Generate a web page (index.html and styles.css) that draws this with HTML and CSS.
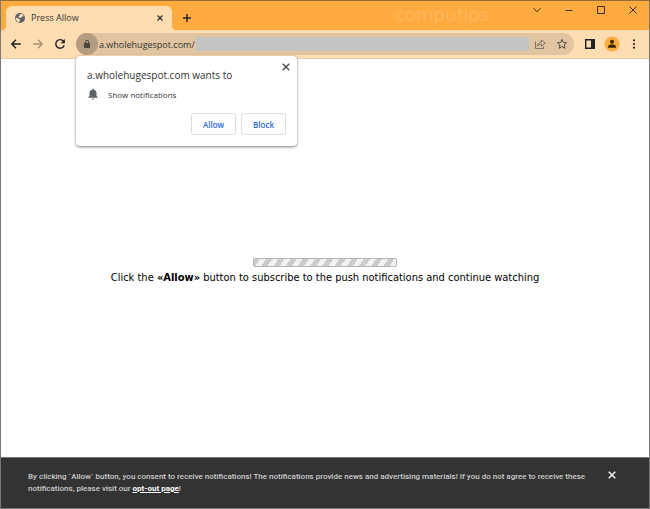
FILE: index.html
```html
<!DOCTYPE html>
<html lang="en">
<head>
    <meta charset="UTF-8">
    <meta name="viewport" content="width=device-width, initial-scale=1.0">
    <title>Press Allow</title>
    <link rel="stylesheet" href="styles.css">
</head>
<body>
    <div class="window">
        <header class="title-bar">
            <div class="tab">
                <svg class="tab-icon" width="12" height="12" viewBox="0 0 12 12">
                    <circle cx="6" cy="6" r="5" fill="#5f6368"/>
                    <path d="M5.800 1.900L8.800 2.300 9.700 4.200 7.700 4.700 6.800 5.900 4.800 5.500 4.400 4.200 5.900 3.500zM1.700 5.600L4 6.400 6 7.300 6 8.800 4.800 10.200 3 9.400 1.900 7.600z" fill="#ffddb3"/>
                </svg>
                <span class="tab-title">Press Allow</span>
                <button class="icon-button tab-close" aria-label="Close tab">
                    <svg width="6" height="6" viewBox="0 0 6 6"><path d="M.5.5l5 5M5.5.5l-5 5" stroke="#333" stroke-width="1.3"/></svg>
                </button>
            </div>
            <button class="icon-button new-tab" aria-label="New tab">
                <svg width="8" height="8" viewBox="0 0 8 8"><path d="M4 0v8M0 4h8" stroke="#29251f" stroke-width="1.5"/></svg>
            </button>
            <span class="watermark">computips</span>
            <div class="window-controls">
                <button class="icon-button" aria-label="Search tabs">
                    <svg width="8" height="8" viewBox="0 0 8 8"><path d="M.5 2.2L4 5.8l3.500-3.600" fill="none" stroke="#3b2b18"/></svg>
                </button>
                <button class="icon-button" aria-label="Minimize">
                    <svg width="8" height="8" viewBox="0 0 8 8"><path d="M.5 4.500h7" stroke="#3b2b18"/></svg>
                </button>
                <button class="icon-button" aria-label="Maximize">
                    <svg width="8" height="8" viewBox="0 0 8 8"><path d="M.5.5h7v7h-7z" fill="none" stroke="#3b2b18"/></svg>
                </button>
                <button class="icon-button" aria-label="Close">
                    <svg width="8" height="8" viewBox="0 0 8 8"><path d="M.5.5l7 7M7.500.5l-7 7" stroke="#3b2b18"/></svg>
                </button>
            </div>
        </header>

        <div class="toolbar">
            <button class="icon-button tool" aria-label="Back">
                <svg width="10" height="10" viewBox="0 0 10 10"><path d="M9.800 5H1M5 .8L.8 5 5 9.200" fill="none" stroke="#222" stroke-width="1.400"/></svg>
            </button>
            <button class="icon-button tool" aria-label="Forward">
                <svg width="10" height="10" viewBox="0 0 10 10"><path d="M.2 5H9M5 .8L9.200 5 5 9.200" fill="none" stroke="#a38d70" stroke-width="1.300"/></svg>
            </button>
            <button class="icon-button tool" aria-label="Reload">
                <svg width="12" height="12" viewBox="0 0 12 12"><path d="M9.600 3.400A4.300 4.300 0 1 0 10.200 7.200" fill="none" stroke="#222" stroke-width="1.400"/><path d="M10.900 1v4.200H6.700z" fill="#222"/></svg>
            </button>

            <div class="address-bar">
                <button class="icon-button lock" aria-label="Site information">
                    <svg width="8" height="10" viewBox="0 0 8 10"><path d="M1 4h6v5H1z" fill="#4c463f"/><path d="M2.400 4.500V3a1.600 1.600 0 0 1 3.200 0v1.500" fill="none" stroke="#4c463f"/></svg>
                </button>
                <span class="url">a.wholehugespot.com/</span>
                <span class="url-rest"></span>
                <button class="icon-button bar-tool" aria-label="Share">
                    <svg width="12" height="12" viewBox="0 0 12 12"><path d="M1.500 3.500v7h8V8.800" fill="none" stroke="#7d7264"/><path d="M3.300 8.200C3.500 5.700 4.900 4.200 7.400 4V1.900L11.200 5.100 7.400 8.300V6.200C5.600 6.200 4.400 6.800 3.300 8.200z" fill="none" stroke="#7d7264"/></svg>
                </button>
                <button class="icon-button bar-tool" aria-label="Bookmark this tab">
                    <svg width="12" height="12" viewBox="0 0 12 12"><path d="M6 1.400L7.300 4.500 10.700 4.800 8.100 7 8.900 10.300 6 8.500 3.100 10.300 3.900 7 1.300 4.800 4.700 4.500z" fill="none" stroke="#55504a"/></svg>
                </button>
            </div>

            <button class="icon-button tool" aria-label="Side panel">
                <svg width="10" height="10" viewBox="0 0 10 10"><path d="M.7.7h8.600v8.600H.7z" fill="none" stroke="#202124" stroke-width="1.400"/><path d="M6 1h3v8H6z" fill="#202124"/></svg>
            </button>
            <button class="icon-button tool" aria-label="Profile">
                <svg width="16" height="16" viewBox="0 0 16 16"><circle cx="8" cy="8" r="7.500" fill="#ffab40"/><circle cx="8" cy="5.800" r="2" fill="#3b260e"/><path d="M4 11.800v-1C4 9.200 6 8.600 8 8.600s4 .6 4 2.200v1z" fill="#3b260e"/></svg>
            </button>
            <button class="icon-button tool" aria-label="Menu">
                <svg width="4" height="10" viewBox="0 0 4 10"><g fill="#222"><circle cx="2" cy="1.300" r="1.100"/><circle cx="2" cy="5" r="1.100"/><circle cx="2" cy="8.700" r="1.100"/></g></svg>
            </button>
        </div>

        <main class="page">
            <div class="progress"></div>
            <p class="message">Click the <b>«Allow»</b> button to subscribe to the push notifications and continue watching</p>
        </main>

        <footer class="consent">
            <p class="consent-text">By clicking `Allow` button, you consent to receive notifications! The notifications provide news and advertising materials! If you do not agree to receive these notifications, please visit our <a href="#">opt-out page</a>!</p>
            <button class="icon-button consent-close" aria-label="Dismiss">
                <svg width="8" height="8" viewBox="0 0 8 8"><path d="M.7.7l6.600 6.600M7.300.7L.7 7.300" stroke="#eee" stroke-width="1.600"/></svg>
            </button>
        </footer>

        <div class="popup" role="dialog" aria-labelledby="popup-title">
            <button class="icon-button popup-close" aria-label="Close">
                <svg width="8" height="8" viewBox="0 0 8 8"><path d="M.7.7l6.600 6.600M7.300.7L.7 7.300" stroke="#444" stroke-width="1.300"/></svg>
            </button>
            <h1 class="popup-title" id="popup-title">a.wholehugespot.com wants to</h1>
            <div class="permission">
                <svg width="12" height="12" viewBox="0 0 12 12"><path d="M6 .8c.6 0 .9.4.9.9C8.700 2.200 9.500 3.600 9.500 5.200V8l1.300 1.300v.5H1.200v-.5L2.500 8V5.200C2.500 3.600 3.300 2.200 5.100 1.700 5.100 1.200 5.400.8 6 .8zM4.800 10.400h2.400c0 1.500-2.400 1.500-2.400 0z" fill="#5f6368"/></svg>
                <span>Show notifications</span>
            </div>
            <div class="popup-actions">
                <button class="popup-button">Allow</button>
                <button class="popup-button">Block</button>
            </div>
        </div>
    </div>
</body>
</html>
```
FILE: styles.css
```css
* {
    box-sizing: border-box;
}
body {
    margin: 0;
    font-family: 'Open Sans', sans-serif;
    font-size: 9px;
    color: #333;
}
.window {
    position: relative;
    display: flex;
    flex-direction: column;
    min-height: 100vh;
    border: 1px solid #777;
    border-top-color: #936b32;
    background-color: #fff;
}
.icon-button {
    display: flex;
    align-items: center;
    justify-content: center;
    padding: 0;
    border: none;
    background: none;
    cursor: pointer;
}
.title-bar {
    display: flex;
    height: 29px;
    padding-left: 5px;
    background-color: #ffab40;
}
.tab {
    position: relative;
    display: flex;
    align-items: center;
    width: 166px;
    height: 24px;
    margin-top: 5px;
    padding: 0 8px;
    border-radius: 6px 6px 0 0;
    background-color: #ffddb3;
}
.tab::before,
.tab::after {
    content: "";
    position: absolute;
    bottom: 0;
    width: 4px;
    height: 4px;
}
.tab::before {
    right: 100%;
    background: radial-gradient(circle at 0 0, #ffab40 4px, #ffddb3 4px);
}
.tab::after {
    left: 100%;
    background: radial-gradient(circle at 100% 0, #ffab40 4px, #ffddb3 4px);
}
.tab-title {
    flex: 1;
    margin-left: 5px;
    line-height: 12px;
}
.tab-close {
    width: 8px;
    height: 12px;
}
.new-tab {
    width: 30px;
    height: 34px;
}
.watermark {
    margin-left: auto;
    font-size: 19px;
    line-height: 26px;
    color: #ffb75b;
}
.window-controls {
    display: flex;
    margin-left: 32px;
}
.window-controls .icon-button {
    width: 32px;
    height: 18px;
}
.toolbar {
    display: flex;
    align-items: center;
    height: 29px;
    padding: 0 4px;
    border-bottom: 1px solid #e5cba8;
    background-color: #ffddb3;
}
.tool {
    width: 22px;
    height: 22px;
}
.address-bar {
    flex: 1;
    display: flex;
    align-items: center;
    height: 22px;
    margin: 0 5px;
    padding-right: 1px;
    border-radius: 11px;
    background-color: #e1c5a1;
}
.lock {
    width: 22px;
    height: 22px;
    border-radius: 50%;
    background-color: #b39c80;
}
.url {
    margin-left: 1px;
}
.url-rest {
    flex: 1;
    height: 14px;
    margin-left: 1px;
    background-color: #c4c4c4;
}
.bar-tool {
    width: 22px;
    height: 22px;
}
.page {
    flex: 1;
    padding: 199px 20px 0;
    text-align: center;
}
.progress {
    width: 144px;
    height: 9px;
    margin: 0 auto;
    border: 1px solid #b5b5b5;
    border-radius: 2px;
    background: repeating-linear-gradient(125deg, #ccc 0, #ccc 5px, #f2f2f2 5px, #f2f2f2 10px);
}
.message {
    margin: 3px 0 0;
    font-family: 'DejaVu Sans Condensed', 'DejaVu Sans', sans-serif;
    font-size: 11px;
    line-height: 16px;
    color: #000;
}
.consent {
    display: flex;
    align-items: flex-start;
    justify-content: space-between;
    padding: 13px 33px 13px 27px;
    border-top: 1px solid #777;
    background-color: #333;
    color: #ccc;
}
.consent-text {
    margin: 0;
    font-family: Roboto, sans-serif;
    font-size: 8px;
    font-weight: 500;
    line-height: 12px;
}
.consent-text a {
    font-weight: bold;
    color: #fff;
}
.consent-close {
    width: 10px;
    height: 8px;
}
.popup {
    position: absolute;
    top: 55px;
    left: 75px;
    width: 221px;
    padding: 11px;
    border-radius: 4px;
    background-color: #fff;
    box-shadow: 0 1px 3px rgba(0, 0, 0, 0.5);
}
.popup-close {
    position: absolute;
    top: 5px;
    right: 5px;
    width: 12px;
    height: 12px;
}
.popup-title {
    margin: 0;
    font-size: 10px;
    font-weight: normal;
    line-height: 16px;
}
.permission {
    display: flex;
    align-items: center;
    gap: 9px;
    height: 22px;
    font-size: 8px;
}
.popup-actions {
    display: flex;
    justify-content: flex-end;
    gap: 5px;
    margin-top: 8px;
}
.popup-button {
    width: 45px;
    height: 22px;
    padding: 0;
    border: 1px solid #dadce0;
    border-radius: 3px;
    background-color: #fff;
    font-family: inherit;
    font-size: 8px;
    font-weight: 600;
    color: #2a66d9;
    cursor: pointer;
}
```
